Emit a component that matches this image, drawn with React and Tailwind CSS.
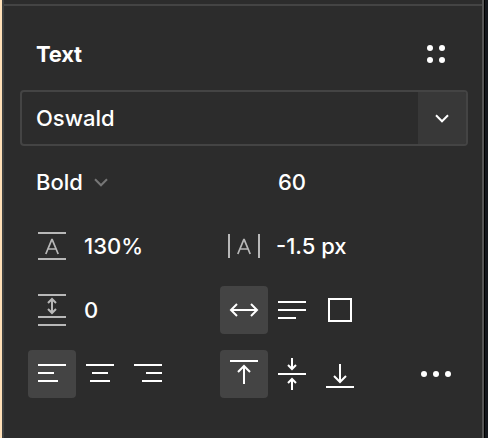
import React from 'react';

function Icon({ children, className = 'text-white' }) {
  return (
    <svg viewBox="0 0 48 48" className={`block size-12 shrink-0 ${className}`} fill="none" stroke="currentColor" strokeWidth="2">
      {children}
    </svg>
  );
}

function Tool({ label, active, children }) {
  return (
    <button aria-label={label} className={`size-12 rounded ${active ? 'bg-[#444444]' : ''}`}>
      <Icon>{children}</Icon>
    </button>
  );
}

function Row({ children }) {
  return <div className="grid h-16 grid-cols-[repeat(9,48px)] items-center pl-6">{children}</div>;
}

export default function App() {
  return (
    <div className="flex h-[438px] w-[488px] overflow-hidden bg-[#14171c] font-['Inter',sans-serif] text-[22px] leading-8 font-medium text-white">
      <div className="w-0.5 bg-[#ffe0b8]" />
      <main className="flex w-[482px] flex-col border-r-2 border-l-2 border-r-[#555555] border-l-[#3e4040] bg-[#2c2c2c]">
        <div className="h-1.5 shrink-0 border-b-2 border-[#444444]" />
        <div className="h-4 shrink-0" />

        <Row>
          <h2 className="col-span-8 pl-2 font-bold tracking-[-0.2px]">Text</h2>
          <button aria-label="Styles">
            <Icon>
              <g fill="currentColor" stroke="none">
                <circle cx="18" cy="18" r="3" />
                <circle cx="30" cy="18" r="3" />
                <circle cx="18" cy="30" r="3" />
                <circle cx="30" cy="30" r="3" />
              </g>
            </Icon>
          </button>
        </Row>

        <div className="flex h-16 shrink-0 items-center pl-4">
          <div className="flex h-14 w-[448px] items-center overflow-hidden rounded border-2 border-[#444444]">
            <span className="flex-1 pl-3.5">Oswald</span>
            <button aria-label="Choose font" className="flex h-full w-12 items-center bg-[#383838]">
              <Icon><path d="M18 21.3l6 6 6-6" /></Icon>
            </button>
          </div>
        </div>

        <Row>
          <button className="col-span-5 flex items-center pl-2 text-left">
            <span className="w-[58px]">Bold</span>
            <svg viewBox="0 0 14 10" className="h-2.5 w-3.5 text-[#777777]" fill="none" stroke="currentColor" strokeWidth="2">
              <path d="M1 2.3l6 6 6-6" />
            </svg>
          </button>
          <span className="col-span-3 pl-2.5">60</span>
        </Row>

        <Row>
          <Icon className="text-[#b8b8b8]">
            <path d="M10 11h28M10 37h28" />
            <path d="M17.8 32L24 17.2 30.2 32M20 27h8" strokeWidth="1.7" strokeLinejoin="bevel" />
          </Icon>
          <span className="col-span-3 pl-2 whitespace-nowrap">130%</span>
          <Icon className="text-[#b8b8b8]">
            <path d="M9 12v24M39 12v24" />
            <path d="M17.8 32L24 17.2 30.2 32M20 27h8" strokeWidth="1.7" strokeLinejoin="bevel" />
          </Icon>
          <span className="col-span-3 pl-2 whitespace-nowrap">-1.5 px</span>
        </Row>

        <Row>
          <Icon className="text-[#b8b8b8]">
            <path d="M10 9h28M10 31h28M10 39h28M24 13v14" />
            <path d="M20 17l4-4 4 4M20 23l4 4 4-4" />
          </Icon>
          <span className="col-span-3 pl-2">0</span>
          <Tool label="Auto width" active>
            <path d="M11.4 24h25.2M17 18l-6 6 6 6M31 18l6 6-6 6" />
          </Tool>
          <Tool label="Auto height"><path d="M10 16h28M10 24h28M10 32h18" /></Tool>
          <Tool label="Fixed size"><rect x="13" y="13" width="22" height="22" /></Tool>
        </Row>

        <Row>
          <Tool label="Align left" active><path d="M10 15h28M10 23h16M10 31h20" /></Tool>
          <Tool label="Align center"><path d="M10 15h28M16 23h16M14 31h20" /></Tool>
          <Tool label="Align right"><path d="M10 15h28M22 23h16M18 31h20" /></Tool>
          <span />
          <Tool label="Align top" active><path d="M10 11h28M24 34V16M18 22l6-6 6 6" /></Tool>
          <Tool label="Align middle">
            <path d="M10 24h28M24 8v11M20 15l4 4 4-4M24 40V29M20 33l4-4 4 4" />
          </Tool>
          <Tool label="Align bottom"><path d="M10 37h28M24 14v18M18 26l6 6 6-6" /></Tool>
          <span />
          <Tool label="Type settings">
            <g fill="currentColor" stroke="none">
              <circle cx="12" cy="24" r="3" />
              <circle cx="24" cy="24" r="3" />
              <circle cx="36" cy="24" r="3" />
            </g>
          </Tool>
        </Row>
      </main>
      <div className="w-px bg-black" />
    </div>
  );
}
